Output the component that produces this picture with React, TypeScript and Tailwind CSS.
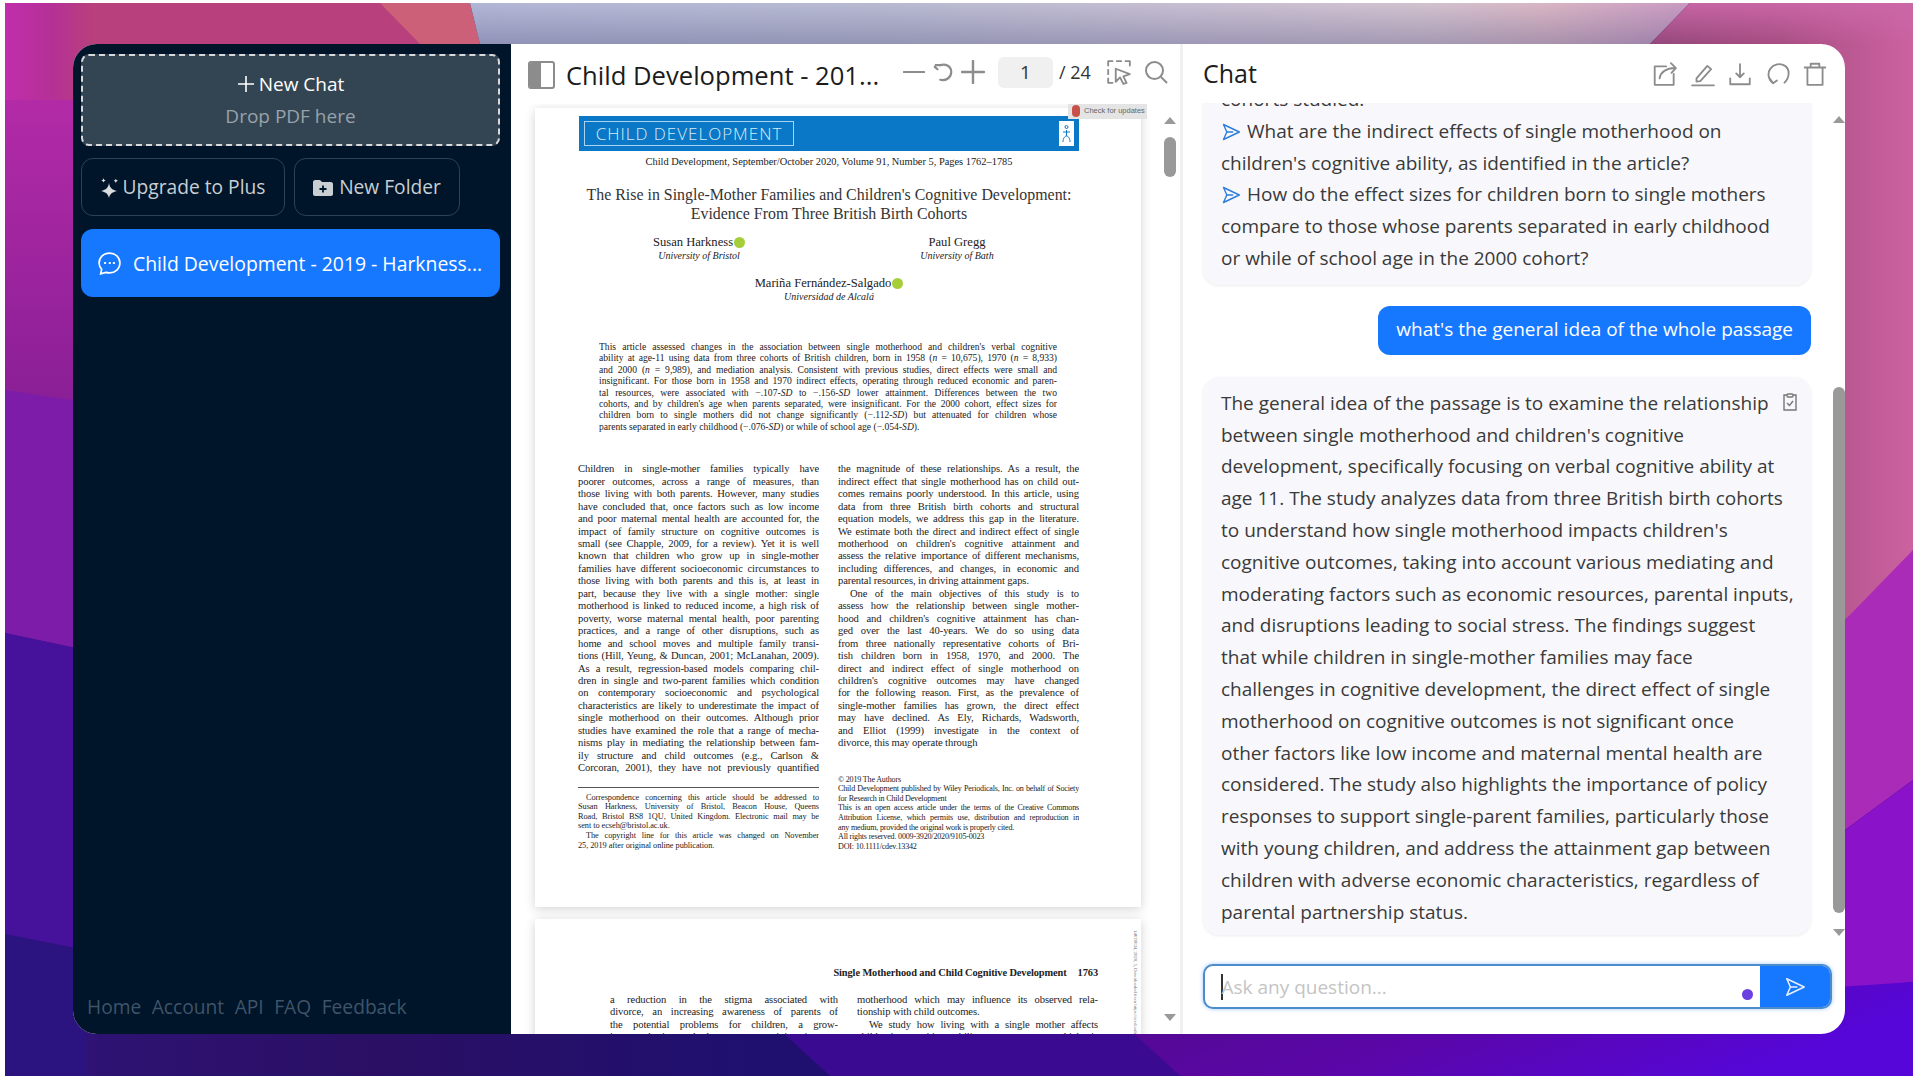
import type { ReactNode } from "react"

const abstractLines: ReactNode[] = [
  "This article assessed changes in the association between single motherhood and children's verbal cognitive",
  <>ability at age-11 using data from three cohorts of British children, born in 1958 (<i>n</i> = 10,675), 1970 (<i>n</i> = 8,933)</>,
  <>and 2000 (<i>n</i> = 9,989), and mediation analysis. Consistent with previous studies, direct effects were small and</>,
  "insignificant. For those born in 1958 and 1970 indirect effects, operating through reduced economic and paren-",
  <>tal resources, were associated with −.107-<i>SD</i> to −.156-<i>SD</i> lower attainment. Differences between the two</>,
  "cohorts, and by children's age when parents separated, were insignificant. For the 2000 cohort, effect sizes for",
  <>children born to single mothers did not change significantly (−.112-<i>SD</i>) but attenuated for children whose</>,
]

const leftColumn = [
  "Children in single-mother families typically have",
  "poorer outcomes, across a range of measures, than",
  "those living with both parents. However, many studies",
  "have concluded that, once factors such as low income",
  "and poor maternal mental health are accounted for, the",
  "impact of family structure on cognitive outcomes is",
  "small (see Chapple, 2009, for a review). Yet it is well",
  "known that children who grow up in single-mother",
  "families have different socioeconomic circumstances to",
  "those living with both parents and this is, at least in",
  "part, because they live with a single mother: single",
  "motherhood is linked to reduced income, a high risk of",
  "poverty, worse maternal mental health, poor parenting",
  "practices, and a range of other disruptions, such as",
  "home and school moves and multiple family transi-",
  "tions (Hill, Yeung, & Duncan, 2001; McLanahan, 2009).",
  "As a result, regression-based models comparing chil-",
  "dren in single and two-parent families which condition",
  "on contemporary socioeconomic and psychological",
  "characteristics are likely to underestimate the impact of",
  "single motherhood on their outcomes. Although prior",
  "studies have examined the role that a range of mecha-",
  "nisms play in mediating the relationship between fam-",
  "ily structure and child outcomes (e.g., Carlson &",
  "Corcoran, 2001), they have not previously quantified",
]

const rightColumnTop = [
  "the magnitude of these relationships. As a result, the",
  "indirect effect that single motherhood has on child out-",
  "comes remains poorly understood. In this article, using",
  "data from three British birth cohorts and structural",
  "equation models, we address this gap in the literature.",
  "We estimate both the direct and indirect effect of single",
  "motherhood on children's cognitive attainment and",
  "assess the relative importance of different mechanisms,",
  "including differences, and changes, in economic and",
]

const rightColumnBottom = [
  "assess how the relationship between single mother-",
  "hood and children's cognitive attainment has chan-",
  "ged over the last 40-years. We do so using data",
  "from three nationally representative cohorts of Bri-",
  "tish children born in 1958, 1970, and 2000. The",
  "direct and indirect effect of single motherhood on",
  "children's cognitive outcomes may have changed",
  "for the following reason. First, as the prevalence of",
  "single-mother families has grown, the direct effect",
  "may have declined. As Ely, Richards, Wadsworth,",
  "and Elliot (1999) investigate in the context of",
]

const answerLines = [
  "The general idea of the passage is to examine the relationship",
  "between single motherhood and children's cognitive",
  "development, specifically focusing on verbal cognitive ability at",
  "age 11. The study analyzes data from three British birth cohorts",
  "to understand how single motherhood impacts children's",
  "cognitive outcomes, taking into account various mediating and",
  "moderating factors such as economic resources, parental inputs,",
  "and disruptions leading to social stress. The findings suggest",
  "that while children in single-mother families may face",
  "challenges in cognitive development, the direct effect of single",
  "motherhood on cognitive outcomes is not significant once",
  "other factors like low income and maternal mental health are",
  "considered. The study also highlights the importance of policy",
  "responses to support single-parent families, particularly those",
  "with young children, and address the attainment gap between",
  "children with adverse economic characteristics, regardless of",
  "parental partnership status.",
]

function Wallpaper() {
  return (
    <svg className="absolute inset-0 w-full h-full" viewBox="5 3 1908 1073" preserveAspectRatio="none">
      <defs>
        <linearGradient id="wallTop" x1="0" y1="0" x2="1" y2="0">
          <stop offset="0" stopColor="#c02eac" />
          <stop offset="0.1" stopColor="#b53096" />
          <stop offset="0.19" stopColor="#b8407c" />
          <stop offset="1" stopColor="#b8407c" />
        </linearGradient>
        <linearGradient id="wallGrey" x1="0" y1="0" x2="1" y2="0">
          <stop offset="0" stopColor="#b3b7d6" />
          <stop offset="0.35" stopColor="#b9bbd2" />
          <stop offset="0.6" stopColor="#c8bfd2" />
          <stop offset="0.78" stopColor="#d2c2cf" />
          <stop offset="0.88" stopColor="#d9b6c4" />
          <stop offset="1" stopColor="#c99ac2" />
        </linearGradient>
        <linearGradient id="wallShade" x1="0" y1="0" x2="0" y2="1">
          <stop offset="0" stopColor="#505080" stopOpacity="0" />
          <stop offset="1" stopColor="#505080" stopOpacity="0.35" />
        </linearGradient>
        <linearGradient id="wallRight" x1="0" y1="0" x2="1" y2="0">
          <stop offset="0" stopColor="#93487a" />
          <stop offset="0.5" stopColor="#a84e84" />
          <stop offset="1" stopColor="#cc62a0" />
        </linearGradient>
        <linearGradient id="wallRightTop" x1="0" y1="0" x2="0" y2="1">
          <stop offset="0" stopColor="#cc68a8" stopOpacity="0.9" />
          <stop offset="1" stopColor="#cc68a8" stopOpacity="0" />
        </linearGradient>
        <linearGradient id="wallLeft" x1="0" y1="0" x2="0" y2="1">
          <stop offset="0" stopColor="#c02eac" />
          <stop offset="1" stopColor="#8a1f96" />
        </linearGradient>
        <linearGradient id="wallBottom" x1="0" y1="0" x2="1" y2="0">
          <stop offset="0" stopColor="#3a1596" />
          <stop offset="0.05" stopColor="#2e1272" />
          <stop offset="0.2" stopColor="#2a0f64" />
          <stop offset="0.4" stopColor="#1f1070" />
        </linearGradient>
        <linearGradient id="wallBottomRight" x1="0" y1="0" x2="1" y2="0.3">
          <stop offset="0" stopColor="#520a8c" />
          <stop offset="0.5" stopColor="#5a06a8" />
          <stop offset="1" stopColor="#5606d8" />
        </linearGradient>
      </defs>
      <rect x="5" y="3" width="1908" height="1073" fill="url(#wallBottom)" />
      <rect x="5" y="3" width="80" height="400" fill="url(#wallLeft)" />
      <polygon points="5,3 470,3 470,100 5,100" fill="url(#wallTop)" />
      <polygon points="380,3 470,3 480,44 420,44" fill="#cc6078" />
      <polygon points="470,3 1690,3 1650,44 480,44" fill="url(#wallGrey)" />
      <polygon points="470,3 1690,3 1650,44 480,44" fill="url(#wallShade)" />
      <polygon points="1690,3 1913,3 1913,560 1845,620 1650,620 1650,44" fill="url(#wallRight)" />
      <polygon points="1690,3 1913,3 1913,44 1650,44" fill="url(#wallRightTop)" />
      <polygon points="5,390 85,402 85,650 5,633" fill="#7d1ca8" />
      <polygon points="5,633 85,650 85,950 5,934" fill="#46129c" />
      <polygon points="5,934 85,950 85,1076 5,1076" fill="#2c1480" />
      <polygon points="1845,620 1913,550 1913,780 1845,830" fill="#aa2bb8" />
      <polygon points="1845,830 1913,780 1913,982 1845,990" fill="#8a12c8" />
      <polygon points="1130,1034 1913,982 1913,1076 1180,1076" fill="url(#wallBottomRight)" />
      <polygon points="780,1030 1130,1030 1180,1076 830,1076" fill="#3a0a90" />
    </svg>
  )
}

function Icon({ className, children }: { className: string; children: ReactNode }) {
  return (
    <svg className={className} viewBox="0 0 24 24" fill="none" stroke="currentColor" strokeWidth="1.7" strokeLinecap="round" strokeLinejoin="round">
      {children}
    </svg>
  )
}

function SendIcon({ className }: { className: string }) {
  return (
    <Icon className={className}>
      <path d="M3 3 22 12 3 21 7 12Z" />
      <path d="M7 12H14" />
    </Icon>
  )
}

function Justified({ children, last }: { children: ReactNode; last?: boolean }) {
  return <div className={last ? "overflow-hidden" : "overflow-hidden [text-align-last:justify]"}>{children}</div>
}

function FirstPage() {
  return (
    <div className="relative w-[606px] h-[799px] shrink-0 bg-white pt-2 pl-[44px] pr-[62px] shadow-[0_2px_10px_rgba(0,0,0,0.18)] font-['Liberation_Serif',serif] text-[#222]">
      <div className="absolute top-[-5px] right-[-6px] w-[79px] h-4 flex items-center gap-1 px-1 bg-[#e4e4e4] text-[7.500px] text-[#666] font-['Liberation_Sans',sans-serif]">
        <span className="w-2 h-3 rounded-full bg-[#c8504a] shrink-0" />
        <span className="whitespace-nowrap">Check for updates</span>
      </div>
      <div className="h-[35px] bg-[#0a78c6] flex items-center justify-between pl-[5px] pr-[5px]">
        <div className="w-[210px] h-[25px] border border-[#a8d4f0] flex items-center justify-center text-[17px] tracking-[1px] text-[#d8ecf8] font-['Open_Sans',sans-serif] font-light whitespace-nowrap">
          CHILD DEVELOPMENT
        </div>
        <div className="w-[15px] h-[25px] bg-white flex items-center justify-center">
          <svg className="w-[11px] h-[20px] text-[#0a78c6]" viewBox="0 0 11 20" fill="none" stroke="currentColor" strokeWidth="1">
            <circle cx="5.500" cy="3" r="1.500" />
            <path d="M2 8h7M5.500 6v6M2 18c0-4 2-6 3.500-6s3.500 2 3.500 6" />
          </svg>
        </div>
      </div>
      <div className="mt-[5px] text-center text-[10.400px] leading-3 whitespace-nowrap">
        Child Development, September/October 2020, Volume 91, Number 5, Pages 1762–1785
      </div>
      <div className="mt-[18px] text-center text-[15.900px] leading-[18.500px] text-[#333]">
        <div className="whitespace-nowrap">The Rise in Single-Mother Families and Children's Cognitive Development:</div>
        <div>Evidence From Three British Birth Cohorts</div>
      </div>
      <div className="mt-[12px] flex text-center">
        <div className="w-[240px]">
          <div className="text-[12.600px] leading-[14px] flex items-center justify-center gap-[1px]">
            Susan Harkness
            <span className="w-[11px] h-[11px] rounded-full bg-[#a6ce39]" />
          </div>
          <div className="text-[10px] leading-[13px] italic">University of Bristol</div>
        </div>
        <div className="w-[170px] ml-[53px]">
          <div className="text-[12.600px] leading-[14px]">Paul Gregg</div>
          <div className="text-[10px] leading-[13px] italic">University of Bath</div>
        </div>
      </div>
      <div className="mt-[14px] text-center">
        <div className="text-[12.600px] leading-[14px] flex items-center justify-center gap-[1px]">
          Mariña Fernández-Salgado
          <span className="w-[11px] h-[11px] rounded-full bg-[#a6ce39]" />
        </div>
        <div className="text-[10px] leading-[13px] italic">Universidad de Alcalá</div>
      </div>
      <div className="mt-[38px] ml-5 w-[458px] text-[9.600px] leading-[11.400px]">
        {abstractLines.map((line, i) => (
          <Justified key={i}>{line}</Justified>
        ))}
        <Justified last>
          parents separated in early childhood (−.076-<i>SD</i>) or while of school age (−.054-<i>SD</i>).
        </Justified>
      </div>
      <div className="mt-[31px] flex gap-[19px] ml-[-1px] text-[10.600px] tracking-[-0.1px] leading-[12.450px]">
        <div className="w-[241px] shrink-0">
          {leftColumn.map((line) => (
            <Justified key={line}>{line}</Justified>
          ))}
          <div className="mt-[12px] border-t border-[#555]" />
          <div className="mt-[5px] text-[8.300px] tracking-[-0.05px] leading-[9.600px]">
            <Justified><span className="ml-2">Correspondence concerning this article should be addressed to</span></Justified>
            <Justified>Susan Harkness, University of Bristol, Beacon House, Queens</Justified>
            <Justified>Road, Bristol BS8 1QU, United Kingdom. Electronic mail may be</Justified>
            <Justified last>sent to ecseh@bristol.ac.uk.</Justified>
            <Justified><span className="ml-2">The copyright line for this article was changed on November</span></Justified>
            <Justified last>25, 2019 after original online publication.</Justified>
          </div>
        </div>
        <div className="w-[241px] shrink-0">
          {rightColumnTop.map((line) => (
            <Justified key={line}>{line}</Justified>
          ))}
          <Justified last>parental resources, in driving attainment gaps.</Justified>
          <Justified><span className="ml-3">One of the main objectives of this study is to</span></Justified>
          {rightColumnBottom.map((line) => (
            <Justified key={line}>{line}</Justified>
          ))}
          <Justified last>divorce, this may operate through</Justified>
          <div className="mt-[25px] text-[8.100px] tracking-[-0.2px] leading-[9.600px]">
            <div>© 2019 The Authors</div>
            <Justified>Child Development published by Wiley Periodicals, Inc. on behalf of Society</Justified>
            <Justified last>for Research in Child Development</Justified>
            <Justified>This is an open access article under the terms of the Creative Commons</Justified>
            <Justified>Attribution License, which permits use, distribution and reproduction in</Justified>
            <Justified last>any medium, provided the original work is properly cited.</Justified>
            <div>All rights reserved. 0009-3920/2020/9105-0023</div>
            <div>DOI: 10.1111/cdev.13342</div>
          </div>
        </div>
      </div>
    </div>
  )
}

function SecondPage() {
  return (
    <div className="relative w-[606px] h-[300px] shrink-0 mt-3 bg-white pl-[75px] pr-[43px] pt-[48px] shadow-[0_2px_10px_rgba(0,0,0,0.18)] font-['Liberation_Serif',serif] text-[#222] text-[10.600px] tracking-[-0.1px] leading-[12.500px]">
      <div className="absolute top-[11px] right-[3px] text-[5px] leading-[6px] text-[#777] [writing-mode:vertical-rl] whitespace-nowrap">
        14678624, 2020, 5, Downloaded from https://srcd.onlinelibrary
      </div>
      <div className="flex justify-end gap-[11px] text-[10.400px] font-bold whitespace-nowrap">
        <span>Single Motherhood and Child Cognitive Development</span>
        <span>1763</span>
      </div>
      <div className="mt-[14px] flex gap-[19px]">
        <div className="w-[228px] shrink-0">
          <Justified>a reduction in the stigma associated with</Justified>
          <Justified>divorce, an increasing awareness of parents of</Justified>
          <Justified>the potential problems for children, a grow-</Justified>
          <Justified>ing emphasis on both parents remaining in con-</Justified>
        </div>
        <div className="w-[241px] shrink-0">
          <Justified>motherhood which may influence its observed rela-</Justified>
          <Justified last>tionship with child outcomes.</Justified>
          <Justified><span className="ml-3">We study how living with a single mother affects</span></Justified>
          <Justified>children's cognitive ability, an outcome which is</Justified>
        </div>
      </div>
    </div>
  )
}

function ChatActions() {
  return (
    <div className="flex items-center gap-[11.500px] text-[#8c8c8c]">
      <Icon className="w-[26px] h-[26px]">
        <path d="M13 5H2.500V22H20V12" />
        <path d="M7 16C8 10 12 7 21 6.500M17.500 2 22 6.500 18 11" />
      </Icon>
      <Icon className="w-[26px] h-[26px]">
        <path d="M6 16 16 4.500 19.500 7.500 9.500 18.500 6 19Z" />
        <path d="M2 22.500H22" />
      </Icon>
      <Icon className="w-[26px] h-[26px]">
        <path d="M12 3V15M8.500 11.500 12 15 15.500 11.500" />
        <path d="M3 16V21.500H21V16" />
      </Icon>
      <Icon className="w-[26px] h-[26px]">
        <path d="M7 20C3 17 2 11 5 7S14 1.500 18.500 4.500 23 15 18 20" />
        <path d="M4.500 16.500 7.500 20.500 11 18" />
      </Icon>
      <Icon className="w-[26px] h-[26px]">
        <path d="M2.500 6H21.500M8 5V2.500H16V5M5 6V22H19V6" />
      </Icon>
    </div>
  )
}

function Scrollbar({ thumbClass }: { thumbClass: string }) {
  return (
    <div className="absolute right-0 top-0 bottom-0 w-3 flex flex-col items-center">
      <span className="w-0 h-0 mt-0 border-x-[6px] border-x-transparent border-b-[7px] border-b-[#999]" />
      <span className={thumbClass} />
      <span className="w-0 h-0 mt-auto border-x-[6px] border-x-transparent border-t-[7px] border-t-[#999]" />
    </div>
  )
}

export default function App() {
  return (
    <div className="w-[1920px] h-[1080px] overflow-hidden bg-white pl-[5px] pt-[3px] font-['Open_Sans',sans-serif]">
      <div className="relative w-[1908px] h-[1073px] pl-[68px] pt-[41px]">
        <Wallpaper />
        <div className="relative flex w-[1772px] h-[990px] rounded-[24px] overflow-hidden bg-white">
          {/* sidebar */}
          <aside className="w-[438px] shrink-0 bg-[#001529] pl-[8px] pr-[11px] pt-[10px] pb-[12px] flex flex-col">
            <div className="h-[92px] rounded-lg border-2 border-dashed border-[#d9d9d9] bg-[#334552] flex flex-col items-center justify-center text-[19px] leading-8">
              <div className="flex items-center gap-1 text-white">
                <svg className="w-[18px] h-[18px]" viewBox="0 0 18 18" stroke="currentColor" strokeWidth="1.600">
                  <path d="M9 1V17M1 9H17" />
                </svg>
                New Chat
              </div>
              <div className="text-[#98a2aa]">Drop PDF here</div>
            </div>
            <div className="mt-3 flex gap-[9px] text-[19.200px] text-[#c9ced3]">
              <div className="w-[204px] h-[58px] pt-[1px] rounded-xl border border-[#2c4258] flex items-center justify-center gap-1">
                <svg className="w-[18px] h-[20px]" viewBox="0 0 18 20" fill="#d9dde0">
                  <path d="M8 5C9 10 10.500 11.500 16 13 10.500 14.500 9 16 8 20 7 16 5.500 14.500 0 13 5.500 11.500 7 10 8 5Z" />
                  <path d="M4 2.500 5 .5 6 2.500 8 3.500 6 4.500 5 6.500 4 4.500 2 3.500Z" transform="translate(-1 0) scale(.7)" />
                  <path d="M13 3 14 1 15 3 17 4 15 5 14 7 13 5 11 4Z" transform="translate(5 0) scale(.7)" />
                </svg>
                Upgrade to Plus
              </div>
              <div className="w-[166px] h-[58px] pt-[1px] rounded-xl border border-[#2c4258] flex items-center justify-center gap-[6px]">
                <svg className="w-5 h-4" viewBox="0 0 20 16">
                  <path d="M0 2C0 1 1 0 2 0H7L9 2H18C19 2 20 3 20 4V14C20 15 19 16 18 16H2C1 16 0 15 0 14Z" fill="#c9ced3" />
                  <path d="M10 5.500V12.500M6.500 9H13.500" stroke="#001529" strokeWidth="1.800" />
                </svg>
                New Folder
              </div>
            </div>
            <div className="mt-[13px] h-[68px] pt-[1px] rounded-xl bg-[#1677ff] flex items-center pl-4 gap-[11px] text-[19.400px] text-white whitespace-nowrap">
              <svg className="w-[25px] h-[25px] shrink-0" viewBox="0 0 24 24" fill="none" stroke="currentColor" strokeWidth="1.600">
                <path d="M12 2C6.500 2 2 6 2 11.500 2 14 3 16 4.500 17.500L3.500 22 8.500 20.500C9.500 20.900 10.700 21 12 21 17.500 21 22 17 22 11.500S17.500 2 12 2Z" />
                <path d="M7.500 11.500H8M12 11.500H12.500M16 11.500H16.500" strokeLinecap="round" strokeWidth="1.800" />
              </svg>
              Child Development - 2019 - Harkness...
            </div>
            <div className="mt-auto pl-[6px] flex gap-[10.500px] text-[19.200px] text-[#3f5468]">
              <span>Home</span>
              <span>Account</span>
              <span>API</span>
              <span>FAQ</span>
              <span>Feedback</span>
            </div>
          </aside>

          {/* pdf viewer */}
          <section className="w-[672px] shrink-0 flex flex-col border-r-[3px] border-[#f1f1f1]">
            <div className="h-[60px] shrink-0 flex items-center pl-[17px] pt-[2px]">
              <div className="w-[27px] h-[28px] rounded-[3px] border-2 border-[#8c8c8c] flex overflow-hidden shrink-0">
                <span className="w-[11px] bg-[#8c8c8c]" />
              </div>
              <span className="ml-[11px] w-[312px] mt-[2px] text-[25.600px] text-[#1c1c1c] whitespace-nowrap">Child Development - 201...</span>
              <div className="flex items-center gap-[7px] ml-[25px] text-[#8c8c8c] mt-[-7px]">
                <Icon className="w-[22px] h-[22px]"><path d="M1 12H23" strokeWidth="2.400" /></Icon>
                <Icon className="w-[22px] h-[22px]">
                  <path d="M9 4.500C15 2.500 21 6 21 12S15 22 9 20.500" strokeWidth="2.400" />
                  <path d="M4 4.500H9M6 9 3 6.500" strokeWidth="2.400" />
                </Icon>
                <Icon className="w-[24px] h-[24px]"><path d="M12 1V23M1 12H23" strokeWidth="2.400" /></Icon>
              </div>
              <div className="ml-[13px] mt-[-5px] w-[55px] h-[31px] rounded-md bg-[#f0f0f0] flex items-center justify-center text-[19px] text-[#333]">1</div>
              <span className="ml-[6px] mt-[-5px] text-[18px] text-[#333] whitespace-nowrap">/ 24</span>
              <Icon className="ml-[15px] mt-[-6px] w-[26px] h-[28px] text-[#8c8c8c]">
                <path d="M2 6V2H6M10 2H14M18 2H22V6M2 10V14M2 18V22H6" />
                <path d="M9 9 22 14 16 16 19 22 16 23 13 17 9 21Z" />
              </Icon>
              <svg className="ml-[12px] mt-[-6px] w-6 h-6 text-[#8c8c8c]" viewBox="0 0 24 24" fill="none" stroke="currentColor" strokeWidth="2">
                <circle cx="10.500" cy="10.500" r="8.500" />
                <path d="M17 17 23 23" />
              </svg>
            </div>
            <div className="relative flex-1 min-h-0 overflow-hidden bg-white">
              <div className="flex flex-col pl-[24px] pt-[4px]">
                <FirstPage />
                <SecondPage />
              </div>
              <div className="absolute left-[653px] top-[13px] bottom-[13px] w-3">
                <Scrollbar thumbClass="w-3 h-10 mt-[13px] rounded-full bg-[#999]" />
              </div>
            </div>
          </section>

          {/* chat */}
          <section className="relative flex-1 min-w-0 flex flex-col">
            <div className="h-[59px] shrink-0 flex items-center justify-between pl-[20px] pr-[17px]">
              <span className="text-[25px] text-[#1c1c1c] mt-[1px]">Chat</span>
              <ChatActions />
            </div>
            <div className="relative h-[836px] shrink-0 overflow-hidden text-[19px] leading-[31.800px] text-[#3a3a3a]">
              <div className="flex flex-col pl-[20px] pr-[34px] mt-[-27px]">
                <div className="rounded-2xl bg-[#f8f8fc] px-[18px] pt-[8px] pb-[10px] shadow-[0_1px_3px_rgba(0,0,0,0.08)] whitespace-nowrap">
                  <div>cohorts studied:</div>
                  <div className="flex items-center gap-[6px]">
                    <SendIcon className="w-5 h-5 text-[#2e7ddb] shrink-0" />
                    What are the indirect effects of single motherhood on
                  </div>
                  <div>children's cognitive ability, as identified in the article?</div>
                  <div className="flex items-center gap-[6px]">
                    <SendIcon className="w-5 h-5 text-[#2e7ddb] shrink-0" />
                    How do the effect sizes for children born to single mothers
                  </div>
                  <div>compare to those whose parents separated in early childhood</div>
                  <div>or while of school age in the 2000 cohort?</div>
                </div>
                <div className="self-end mt-[21px] h-[49px] px-[18px] rounded-[12px] bg-[#1677ff] text-white flex items-center whitespace-nowrap">
                  what's the general idea of the whole passage
                </div>
                <div className="relative mt-[22px] rounded-2xl bg-[#f8f8fc] px-[18px] pt-[11px] pb-[7px] shadow-[0_1px_3px_rgba(0,0,0,0.08)] whitespace-nowrap">
                  <svg className="absolute right-[13px] top-[16px] w-[16px] h-[18px] text-[#777]" viewBox="0 0 16 18" fill="none" stroke="currentColor" strokeWidth="1.400">
                    <path d="M5 2H2V17H14V2H11" />
                    <rect x="5" y="1" width="6" height="3" rx="1" />
                    <path d="M5 10 7.500 12.500 11 8" />
                  </svg>
                  {answerLines.map((line) => (
                    <div key={line}>{line}</div>
                  ))}
                </div>
              </div>
              <div className="absolute right-0 top-[13px] h-[820px] w-3">
                <Scrollbar thumbClass="w-3 h-[526px] mt-[264px] rounded-full bg-[#999]" />
              </div>
            </div>
            <div className="absolute left-[20px] top-[920px] w-[629px] h-[45px] flex rounded-[10px] border-2 border-[#4c8ccb] shadow-[0_0_4px_rgba(22,119,255,0.4)] overflow-hidden bg-white">
              <div className="relative flex-1 flex items-center pl-[16px]">
                <span className="w-[1.500px] h-[26px] bg-[#333] mr-[-1px]" />
                <span className="text-[19px] text-[#c4c4c4] mt-[1px]">Ask any question...</span>
                <span className="absolute right-[7px] bottom-[7px] w-[11px] h-[11px] rounded-full bg-[#6a40e0]" />
              </div>
              <div className="w-[70px] bg-[#1677ff] flex items-center justify-center">
                <SendIcon className="w-[22px] h-[22px] text-[#e6f0ff]" />
              </div>
            </div>
          </section>
        </div>
      </div>
    </div>
  )
}
